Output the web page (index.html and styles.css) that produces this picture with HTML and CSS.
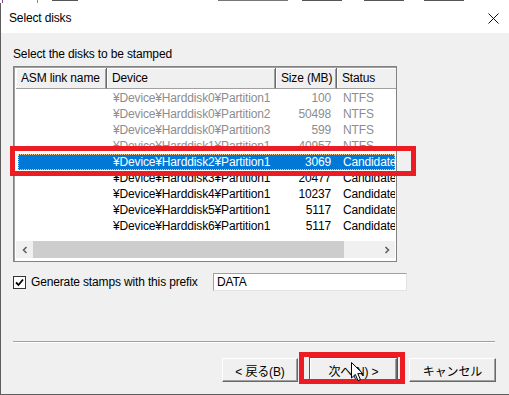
FILE: index.html
```html
<!DOCTYPE html>
<html lang="en">
<head>
    <meta charset="UTF-8">
    <title>Select disks</title>
    <link rel="stylesheet" href="styles.css">
</head>
<body>
<div class="screen">
    <!-- strip of the window behind the dialog -->
    <div class="behind">
        <span class="bit b1"></span>
        <span class="bit b2"></span>
        <span class="bit b3"></span>
        <span class="bit b4"></span>
        <span class="bit b5"></span>
        <span class="bit b6"></span>
        <span class="bit b7"></span>
    </div>

    <div class="dialog">
        <div class="titlebar">
            <span class="title">Select disks</span>
            <svg class="close" width="11" height="11" viewBox="0 0 11 11">
                <path d="M0.5 0.5 L10.5 10.5 M10.5 0.5 L0.5 10.5" stroke="#111" stroke-width="1"/>
            </svg>
        </div>

        <div class="content">
            <div class="caption">Select the disks to be stamped</div>

            <div class="list">
                <div class="list-head">
                    <div class="hcell">ASM link name</div>
                    <div class="hcell">Device</div>
                    <div class="hcell">Size (MB)</div>
                    <div class="hcell last">Status</div>
                </div>
                <div class="rows">
                    <div class="row dim"><span></span><span>¥Device¥Harddisk0¥Partition1</span><span class="num">100</span><span>NTFS</span></div>
                    <div class="row dim"><span></span><span>¥Device¥Harddisk0¥Partition2</span><span class="num">50498</span><span>NTFS</span></div>
                    <div class="row dim"><span></span><span>¥Device¥Harddisk0¥Partition3</span><span class="num">599</span><span>NTFS</span></div>
                    <div class="row dim"><span></span><span>¥Device¥Harddisk1¥Partition1</span><span class="num">40957</span><span>NTFS</span></div>
                    <div class="row selected"><span></span><span>¥Device¥Harddisk2¥Partition1</span><span class="num">3069</span><span>Candidate</span></div>
                    <div class="row"><span></span><span>¥Device¥Harddisk3¥Partition1</span><span class="num">20477</span><span>Candidate</span></div>
                    <div class="row"><span></span><span>¥Device¥Harddisk4¥Partition1</span><span class="num">10237</span><span>Candidate</span></div>
                    <div class="row"><span></span><span>¥Device¥Harddisk5¥Partition1</span><span class="num">5117</span><span>Candidate</span></div>
                    <div class="row"><span></span><span>¥Device¥Harddisk6¥Partition1</span><span class="num">5117</span><span>Candidate</span></div>
                </div>
                <div class="hscroll">
                    <div class="arrow">
                        <svg width="8" height="8" viewBox="0 0 8 8"><path d="M5.5 1 L2.5 4 L5.5 7" stroke="#606060" stroke-width="1.6" fill="none"/></svg>
                    </div>
                    <div class="track"><div class="thumb"></div></div>
                    <div class="arrow">
                        <svg width="8" height="8" viewBox="0 0 8 8"><path d="M2.5 1 L5.5 4 L2.5 7" stroke="#606060" stroke-width="1.6" fill="none"/></svg>
                    </div>
                </div>
            </div>

            <div class="prefix-row">
                <span class="checkbox">
                    <svg width="11" height="11" viewBox="0 0 11 11"><path d="M2 5.5 L4.5 8 L9 2.5" stroke="#000" stroke-width="1.8" fill="none"/></svg>
                </span>
                <span class="prefix-label">Generate stamps with this prefix</span>
                <div class="textbox">DATA</div>
            </div>

            <div class="separator"></div>

            <div class="buttons">
                <button class="btn back">&lt; 戻る(B)</button>
                <button class="btn next">次へ(N) &gt;</button>
                <button class="btn cancel">キャンセル</button>
            </div>
        </div>
    </div>

    <!-- annotations drawn over the screenshot -->
    <div class="mark mark-row"></div>
    <div class="mark mark-next"></div>
    <svg class="cursor" width="13" height="20" viewBox="0 0 13 20">
        <path d="M0.5 0.5 L0.5 16 L4.3 12.4 L7 18.6 L9.4 17.6 L6.8 11.6 L11.8 11.6 Z" fill="#fff" stroke="#000" stroke-width="1"/>
    </svg>
</div>
</body>
</html>
```

FILE: styles.css
```css
body {
    margin: 0;
    font-family: "Liberation Sans", "Noto Sans CJK JP", sans-serif;
    font-size: 12px;
    letter-spacing: -0.15px;
    color: #000;
}

.screen {
    position: relative;
    width: 509px;
    height: 395px;
    overflow: hidden;
    background: #f0f0f0;
}

.behind {
    height: 3px;
    background: #fff;
    display: flex;
    align-items: flex-start;
}

.bit {
    display: block;
    height: 2px;
    background: #555;
}

.b1 { width: 1px; height: 3px; margin-left: 2px; background: #7b4b8a; }
.b2 { width: 1px; height: 3px; margin-left: 34px; background: #888; }
.b3 { width: 26px; margin-left: 14px; height: 1px; }
.b4 { width: 70px; margin-left: 140px; height: 1px; background: #777; }
.b5 { width: 40px; margin-left: 14px; height: 1px; }
.b6 { width: 40px; margin-left: 22px; height: 1px; }
.b7 { width: 40px; margin-left: 20px; height: 1px; }

.dialog {
    height: 391px;
    border-left: 1px solid #5d5d5d;
    border-bottom: 1px solid #5d5d5d;
    display: flex;
    flex-direction: column;
}

.titlebar {
    height: 30px;
    background: #fff;
    display: flex;
    align-items: center;
    justify-content: space-between;
    padding: 0 10px 0 8px;
}

.close {
    display: block;
}

.content {
    flex: 1;
    background: #f0f0f0;
    padding-left: 12px;
    display: flex;
    flex-direction: column;
}

.caption {
    margin-top: 13px;
    line-height: 16px;
}

.list {
    margin-top: 4px;
    width: 384px;
    height: 196px;
    box-sizing: border-box;
    border: 1px solid #828282;
    box-shadow: inset 1px 1px 0 #a0a0a0;
    padding: 1px 1px 2px 2px;
    background: #fff;
    display: flex;
    flex-direction: column;
    overflow: hidden;
}

.list-head {
    display: grid;
    grid-template-columns: 91px 169px 61px 80px;
    height: 21px;
    flex: none;
}

.hcell {
    background: #f0f0f0;
    border-right: 1px solid #696969;
    border-bottom: 1px solid #a0a0a0;
    box-shadow: inset 1px 1px 0 #fff, inset -1px 0 0 #a0a0a0;
    padding-left: 5px;
    line-height: 20px;
    white-space: nowrap;
}

.hcell.last {
    border-right: none;
}

.rows {
    flex: 1;
    padding-top: 1px;
    overflow: hidden;
}

.row {
    display: grid;
    grid-template-columns: 89px 169px 61px 80px;
    height: 16px;
    line-height: 16px;
    margin-left: 2px;
    white-space: nowrap;
}

.row span:nth-child(2) {
    padding-left: 6px;
}

.row .num {
    text-align: right;
    padding-right: 6px;
}

.row span:nth-child(4) {
    padding-left: 6px;
}

.row.dim {
    color: #8d8d8d;
}

.row.selected {
    background: #0078d7;
    color: #fff;
    outline: 1px dotted #f7c98a;
    outline-offset: -1px;
}

.hscroll {
    flex: none;
    height: 17px;
    display: flex;
    background: #f0f0f0;
    margin-bottom: 1px;
}

.arrow {
    width: 17px;
    display: flex;
    align-items: center;
    justify-content: center;
}

.track {
    flex: 1;
    display: flex;
}

.thumb {
    width: 311px;
    background: #cdcdcd;
}

.prefix-row {
    margin-top: 11px;
    display: flex;
    align-items: center;
    height: 18px;
}

.checkbox {
    width: 11px;
    height: 11px;
    border: 1px solid #333;
    background: #fff;
    display: flex;
    align-items: center;
    justify-content: center;
}

.prefix-label {
    width: 182px;
    margin-left: 5px;
}

.textbox {
    width: 194px;
    height: 18px;
    box-sizing: border-box;
    background: #fff;
    border: 1px solid #e3e3e3;
    border-top-color: #a0a0a0;
    border-left-color: #a0a0a0;
    padding-left: 3px;
    line-height: 16px;
}

.separator {
    margin-top: 50px;
    width: 482px;
    height: 1px;
    background: #a0a0a0;
    border-bottom: 1px solid #fff;
}

.buttons {
    margin-top: 15px;
    display: flex;
    justify-content: flex-end;
    padding-right: 13px;
}

.btn {
    height: 24px;
    width: 87px;
    margin-left: 12px;
    font-family: "Liberation Sans", "Noto Sans CJK JP", sans-serif;
    font-size: 12px;
    letter-spacing: -0.15px;
    background: #f0f0f0;
    color: #000;
    border: 1px solid;
    border-color: #fff #696969 #696969 #fff;
    box-shadow: inset -1px -1px 0 #a0a0a0;
    padding: 0;
}

.btn.back {
    width: 76px;
    margin-left: 0;
}

.btn.next {
    outline: 1px solid #555;
}

.mark {
    position: absolute;
    border: 5px solid #ec1c24;
    box-sizing: border-box;
}

.mark-row {
    left: 10px;
    top: 146px;
    width: 406px;
    height: 30px;
}

.mark-next {
    left: 299px;
    top: 352px;
    width: 106px;
    height: 32px;
}

.cursor {
    position: absolute;
    left: 351px;
    top: 362px;
}
```
